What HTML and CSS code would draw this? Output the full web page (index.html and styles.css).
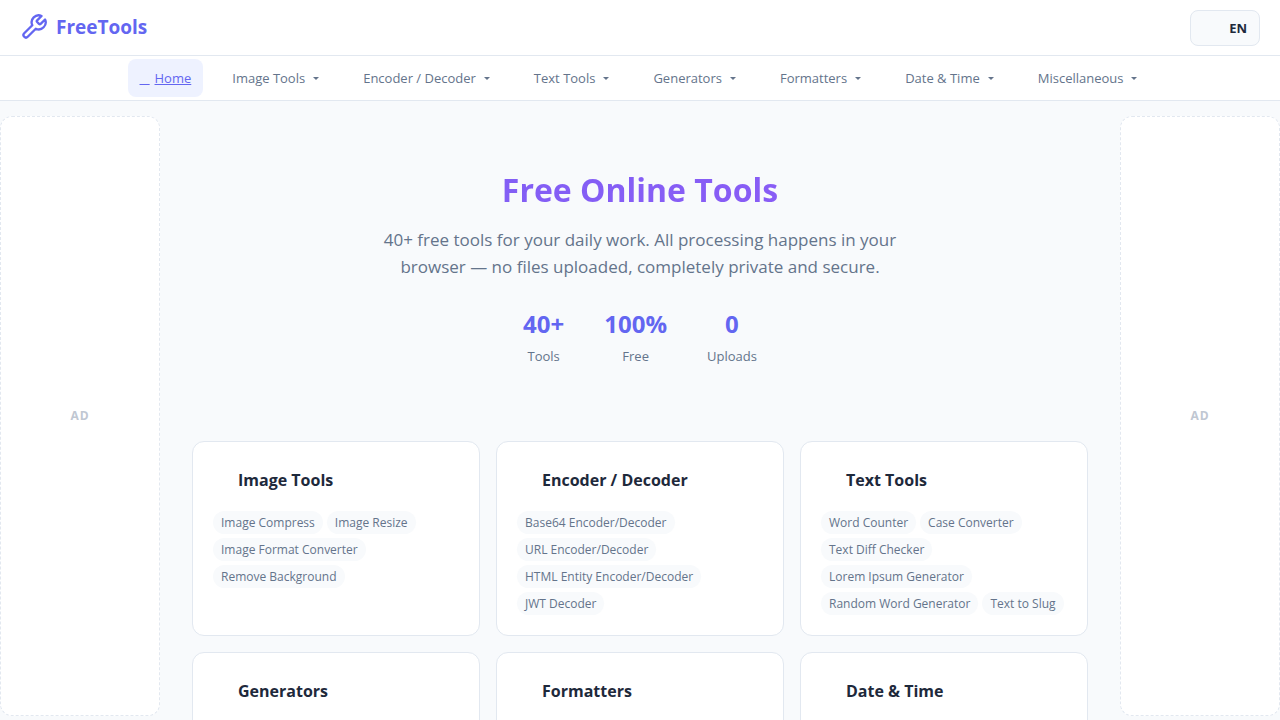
FILE: index.html
```html
<!DOCTYPE html>
<html lang="en">

<head>
    <meta charset="UTF-8">
    <meta name="viewport" content="width=device-width, initial-scale=1.0">
    <title>FreeTools</title>
    <link rel="stylesheet" href="styles.css">
</head>

<body>

    <!-- Header -->
    <header class="header">
        <a class="logo" href="#">
            <svg class="logo-icon" viewBox="0 0 24 24" fill="none" stroke="currentColor" stroke-width="2" stroke-linecap="round" stroke-linejoin="round" aria-hidden="true">
                <path d="M14.7 6.3a1 1 0 0 0 0 1.4l1.6 1.6a1 1 0 0 0 1.4 0l3.77-3.77a6 6 0 0 1-7.94 7.94l-6.91 6.91a2.12 2.12 0 0 1-3-3l6.91-6.91a6 6 0 0 1 7.94-7.94l-3.76 3.76z"/>
            </svg>
            <span>FreeTools</span>
        </a>
        <button class="lang-btn" type="button"><span class="lang-flag"></span>EN</button>
    </header>

    <!-- Navigation -->
    <nav class="nav">
        <a class="nav-item active" href="#"><span class="nav-icon">&nbsp;&nbsp;&nbsp;</span><span>Home</span></a>
        <button class="nav-item" type="button"><span class="nav-icon"></span>Image Tools<span class="caret"></span></button>
        <button class="nav-item" type="button"><span class="nav-icon"></span>Encoder / Decoder<span class="caret"></span></button>
        <button class="nav-item" type="button"><span class="nav-icon"></span>Text Tools<span class="caret"></span></button>
        <button class="nav-item" type="button"><span class="nav-icon"></span>Generators<span class="caret"></span></button>
        <button class="nav-item" type="button"><span class="nav-icon"></span>Formatters<span class="caret"></span></button>
        <button class="nav-item" type="button"><span class="nav-icon"></span>Date &amp; Time<span class="caret"></span></button>
        <button class="nav-item" type="button"><span class="nav-icon"></span>Miscellaneous<span class="caret"></span></button>
    </nav>

    <div class="layout">
        <aside class="ad">AD</aside>

        <main class="main">
            <!-- Hero -->
            <section class="hero">
                <h1>Free Online Tools</h1>
                <p class="hero-text">40+ free tools for your daily work. All processing happens in your browser — no files uploaded, completely private and secure.</p>
                <div class="stats">
                    <div class="stat"><strong>40+</strong><span>Tools</span></div>
                    <div class="stat"><strong>100%</strong><span>Free</span></div>
                    <div class="stat"><strong>0</strong><span>Uploads</span></div>
                </div>
            </section>

            <!-- Categories -->
            <section class="cards">
                <article class="card">
                    <h2>Image Tools</h2>
                    <div class="tags">
                        <span class="tag">Image Compress</span>
                        <span class="tag">Image Resize</span>
                        <span class="tag">Image Format Converter</span>
                        <span class="tag">Remove Background</span>
                    </div>
                </article>
                <article class="card">
                    <h2>Encoder / Decoder</h2>
                    <div class="tags">
                        <span class="tag">Base64 Encoder/Decoder</span>
                        <span class="tag">URL Encoder/Decoder</span>
                        <span class="tag">HTML Entity Encoder/Decoder</span>
                        <span class="tag">JWT Decoder</span>
                    </div>
                </article>
                <article class="card">
                    <h2>Text Tools</h2>
                    <div class="tags">
                        <span class="tag">Word Counter</span>
                        <span class="tag">Case Converter</span>
                        <span class="tag">Text Diff Checker</span>
                        <span class="tag">Lorem Ipsum Generator</span>
                        <span class="tag">Random Word Generator</span>
                        <span class="tag">Text to Slug</span>
                    </div>
                </article>
                <article class="card">
                    <h2>Generators</h2>
                </article>
                <article class="card">
                    <h2>Formatters</h2>
                </article>
                <article class="card">
                    <h2>Date &amp; Time</h2>
                </article>
            </section>
        </main>

        <aside class="ad">AD</aside>
    </div>

</body>

</html>
```

FILE: styles.css
```css
:root {
    --primary: #6366f1;
    --bg: #f8fafc;
    --surface: #ffffff;
    --border: #e2e8f0;
    --text: #1e293b;
    --muted: #64748b;
}

* {
    margin: 0;
    padding: 0;
    box-sizing: border-box;
}

html {
    scrollbar-width: none;
}

body {
    font-family: "Open Sans", "Noto Sans", sans-serif;
    font-size: 16px;
    line-height: 1.6;
    color: var(--text);
    background: var(--bg);
}

button {
    font-family: inherit;
    cursor: pointer;
}

/* Header */
.header {
    display: flex;
    align-items: center;
    justify-content: space-between;
    height: 56px;
    padding: 0 20px;
    background: var(--surface);
    border-bottom: 1px solid var(--border);
}

.logo {
    display: flex;
    align-items: center;
    gap: 8px;
    font-size: 19px;
    font-weight: 700;
    color: var(--primary);
    text-decoration: none;
}

.logo-icon {
    width: 28px;
    height: 28px;
}

.lang-btn {
    display: flex;
    align-items: center;
    gap: 6px;
    height: 36px;
    padding: 0 12px;
    font-size: 13px;
    font-weight: 700;
    color: var(--text);
    background: var(--bg);
    border: 1px solid var(--border);
    border-radius: 8px;
}

.lang-flag {
    width: 20px;
}

/* Navigation */
.nav {
    display: flex;
    align-items: center;
    justify-content: center;
    gap: 2px;
    height: 45px;
    background: var(--surface);
    border-bottom: 1px solid var(--border);
}

.nav-item {
    display: flex;
    align-items: center;
    gap: 5px;
    height: 38px;
    padding: 0 12px;
    font-size: 13px;
    color: var(--muted);
    white-space: nowrap;
    background: none;
    border: none;
    border-radius: 8px;
}

.nav-item.active {
    color: var(--primary);
    background: #eef2ff;
}

.nav-icon {
    width: 10px;
}

.caret {
    display: flex;
    justify-content: center;
    width: 12px;
}

.caret::before {
    content: "";
    border: 3px solid transparent;
    border-top-color: currentColor;
    border-bottom: none;
}

/* Page layout */
.layout {
    display: grid;
    grid-template-columns: 160px minmax(0, 1fr) 160px;
    align-items: start;
}

.ad {
    display: flex;
    align-items: center;
    justify-content: center;
    min-height: 600px;
    margin-top: 15px;
    font-size: 12px;
    font-weight: 700;
    letter-spacing: 1px;
    color: #c0c7d2;
    background: var(--surface);
    border: 1px dashed var(--border);
    border-radius: 12px;
}

.main {
    padding: 0 32px 32px;
}

/* Hero */
.hero {
    padding: 63px 0 73px;
    text-align: center;
}

.hero h1 {
    margin-bottom: 11px;
    font-size: 32px;
    line-height: 51px;
    font-weight: 700;
    color: transparent;
    background: linear-gradient(135deg, #7c61f4, #8f5af6);
    background-clip: text;
    -webkit-background-clip: text;
}

.hero-text {
    max-width: 560px;
    margin: 0 auto 24px;
    font-size: 17px;
    line-height: 27px;
    color: var(--muted);
}

.stats {
    display: flex;
    justify-content: center;
    gap: 40px;
}

.stat strong {
    display: block;
    font-size: 24px;
    line-height: 40px;
    color: var(--primary);
}

.stat span {
    display: block;
    font-size: 13px;
    line-height: 24px;
    color: var(--muted);
}

/* Category cards */
.cards {
    display: grid;
    grid-template-columns: repeat(3, minmax(0, 1fr));
    gap: 16px;
}

.card {
    min-height: 195px;
    padding: 20px;
    background: var(--surface);
    border: 1px solid var(--border);
    border-radius: 12px;
}

.card h2 {
    margin-bottom: 13px;
    padding-left: 25px;
    font-size: 16px;
    line-height: 36px;
    font-weight: 700;
}

.tags {
    display: flex;
    flex-wrap: wrap;
    gap: 4px;
}

.tag {
    padding: 2px 8px;
    font-size: 12px;
    line-height: 19px;
    color: var(--muted);
    background: var(--bg);
    border-radius: 20px;
}
```
